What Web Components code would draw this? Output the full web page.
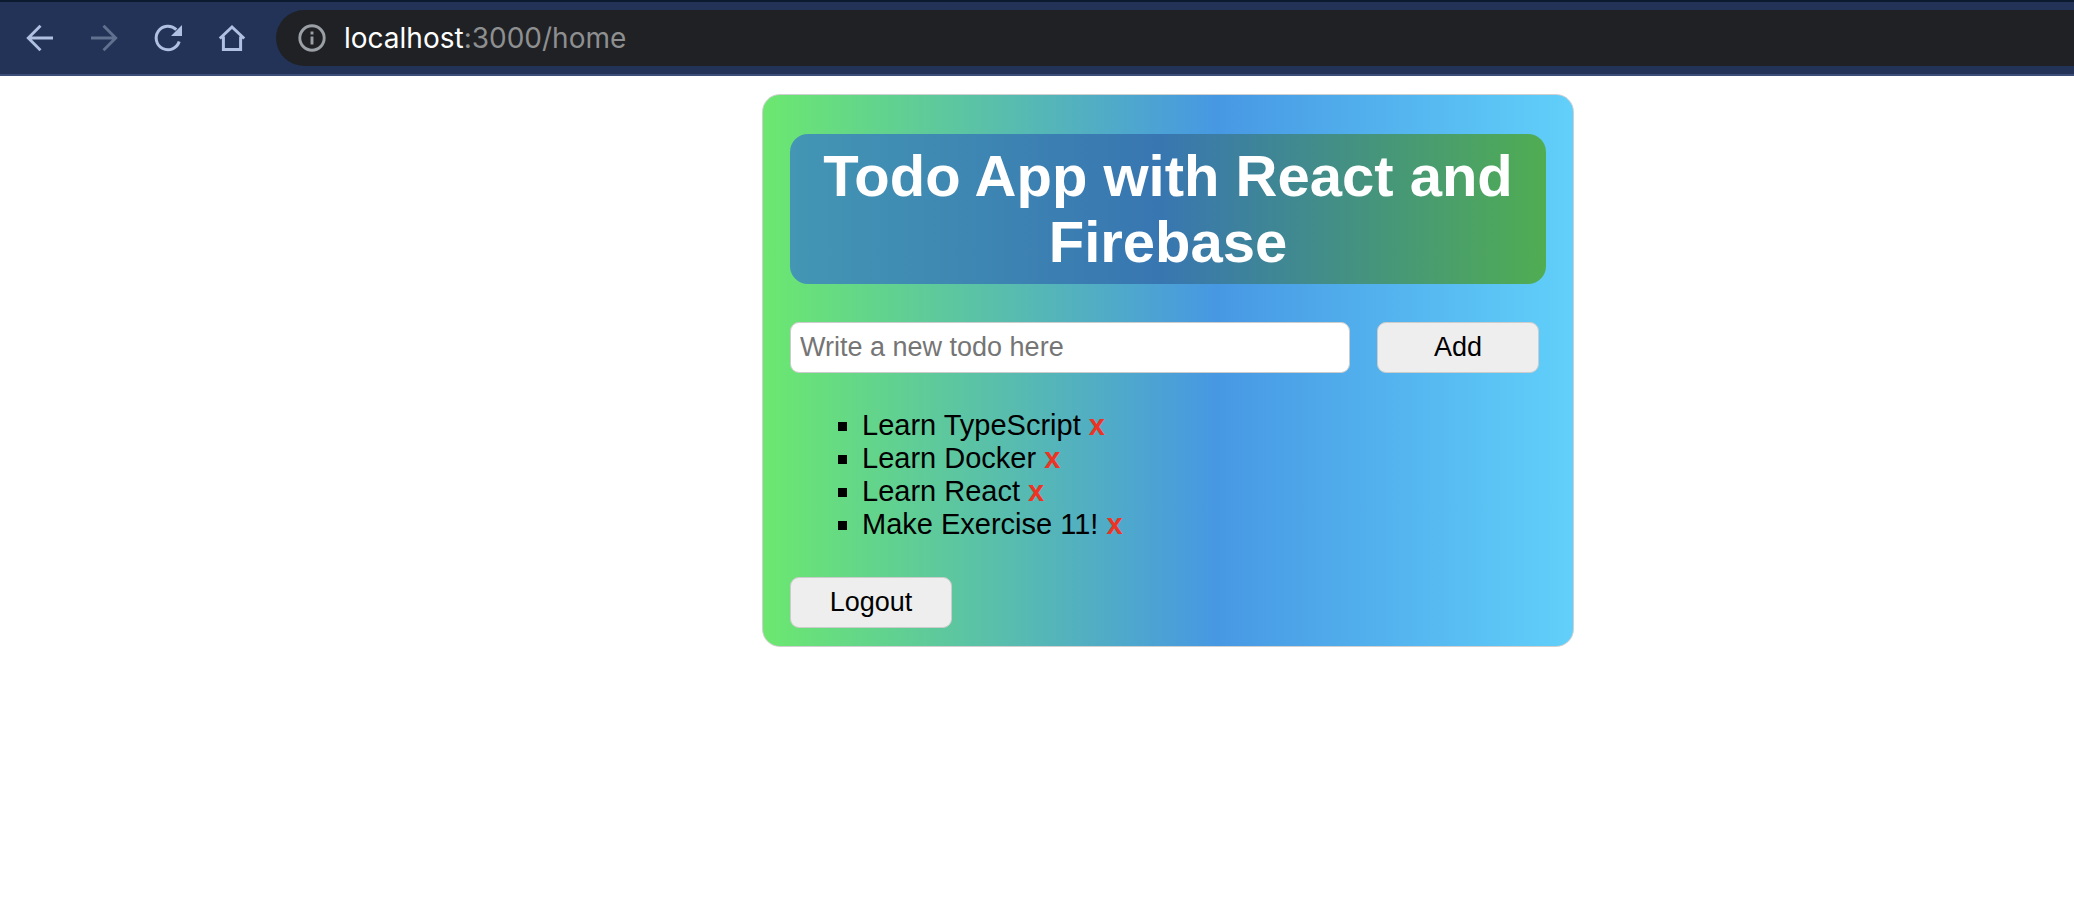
<!DOCTYPE html>
<html lang="en">
<head>
<meta charset="utf-8">
<title>Todo App</title>
<style>
html,body{margin:0;min-height:100%;background:#fff;font-family:"Liberation Sans",Helvetica,Arial,sans-serif}
</style>
</head>
<body>
<browser-bar></browser-bar>
<todo-page>
  <todo-card>
    <todo-title slot="title">Todo App with React and Firebase</todo-title>
    <todo-form></todo-form>
    <todo-list items="Learn TypeScript|Learn Docker|Learn React|Make Exercise 11!"></todo-list>
    <todo-button>Logout</todo-button>
  </todo-card>
</todo-page>
<script>
const define = (name, html, setup) => customElements.define(name, class extends HTMLElement {
  constructor() {
    super();
    this.attachShadow({ mode: 'open' }).innerHTML = html;
  }
  connectedCallback() { if (setup) setup(this, this.shadowRoot); }
});

define('browser-bar', `
<style>
:host{display:flex;align-items:center;height:76px;box-sizing:border-box;padding:0 0 0 24px;background:#223357;border-top:2px solid #0c1a30;border-bottom:2px solid #3c4e78}
nav{display:flex;gap:32px;margin-right:28px}
button{all:unset;display:block;width:32px;height:32px;color:#afc0e2}
button:disabled{color:#60718f}
svg{display:block;width:32px;height:32px}
.address{flex:1;display:flex;align-items:center;gap:16px;height:56px;box-sizing:border-box;padding-left:20px;border-radius:28px 0 0 28px;background:#202124;color:#8e8f91;font:28px/56px Inter,Roboto,sans-serif}
.address svg{color:#9aa0a6}
b{font-weight:400;color:#fff}
</style>
<nav>
<button aria-label="Back"><svg viewBox="0 0 32 32" fill="none" stroke="currentColor" stroke-width="2.9"><path d="M29 16H4.500M16.500 3.800L4.300 16l12.200 12.200"/></svg></button>
<button aria-label="Forward" disabled><svg viewBox="0 0 32 32" fill="none" stroke="currentColor" stroke-width="2.900"><path d="M3 16h24.500M15.500 3.800L27.700 16 15.500 28.200"/></svg></button>
<button aria-label="Reload"><svg viewBox="0 0 32 32" fill="none" stroke="currentColor" stroke-width="3"><path d="M27.200 19.500A11.800 11.800 0 1 1 24.300 7.600"/><path d="M30 3v11H19z" fill="currentColor" stroke="none"/></svg></button>
<button aria-label="Home"><svg viewBox="0 0 32 32" fill="none" stroke="currentColor" stroke-width="3"><path d="M3.800 16.500L16 5l12.200 11.500M7.400 14.500v13.100h17.200V14.500"/></svg></button>
</nav>
<div class="address"><svg viewBox="0 0 32 32" fill="none" stroke="currentColor" stroke-width="2.900"><circle cx="16" cy="16" r="12.200"/><path d="M16 14.500v8M16 9.500v3"/></svg><span><b>localhost</b>:3000/home</span></div>
`);

define('todo-page', `
<style>
:host{display:block;padding:18px 0 0 262px}
</style><slot></slot>`);

define('todo-card', `
<style>
:host{display:block;box-sizing:border-box;max-width:812px;margin:0 auto;padding:39px 27px 18px;border:1px solid #d0d0d0;border-radius:18px;background:linear-gradient(90deg,#6ce86f 0%,#4798e3 56%,#61d0fa 100%);background-origin:border-box}
</style><slot name="title"></slot><slot></slot>`);

define('todo-title', `
<style>
:host{display:block}
h1{margin:0;padding:9px;border-radius:18px;background:linear-gradient(90deg,#4396b4 0%,#3876b1 49%,#50ad52 100%);color:#fff;font-size:58px;line-height:66px;text-align:center}
</style><h1><slot></slot></h1>`);

define('todo-button', `
<style>
:host{display:block;width:162px}
button{display:block;width:100%;height:51px;padding:0;border:1px solid #ccc;border-radius:9px;background:#eee;color:#000;font:27px "Liberation Sans",Helvetica,sans-serif}
</style><button type="button"><slot></slot></button>`);

define('todo-form', `
<style>
:host{display:block;margin:38px 0 36px}
form{display:flex;gap:27px;padding-right:7px}
input{flex:1;min-width:0;height:51px;box-sizing:border-box;padding:0 9px;border:1px solid #ccc;border-radius:9px;background:#fff;font:27px "Liberation Sans",Arial,sans-serif}
input::placeholder{color:#757575}
</style>
<form><input type="text" placeholder="Write a new todo here" aria-label="New todo"><todo-button>Add</todo-button></form>`);

define('todo-list', `
<style>
:host{display:block;margin-bottom:36px}
ul{margin:0;padding-left:72px;list-style:square;font-size:29px;line-height:33px}
button{all:unset;color:#ed3323;font-weight:700;cursor:pointer}
</style><ul></ul>`, (host, root) => {
  root.querySelector('ul').innerHTML = host.getAttribute('items').split('|')
    .map(t => `<li>${t} <button aria-label="Delete ${t}">x</button></li>`).join('');
});
</script>
</body>
</html>
